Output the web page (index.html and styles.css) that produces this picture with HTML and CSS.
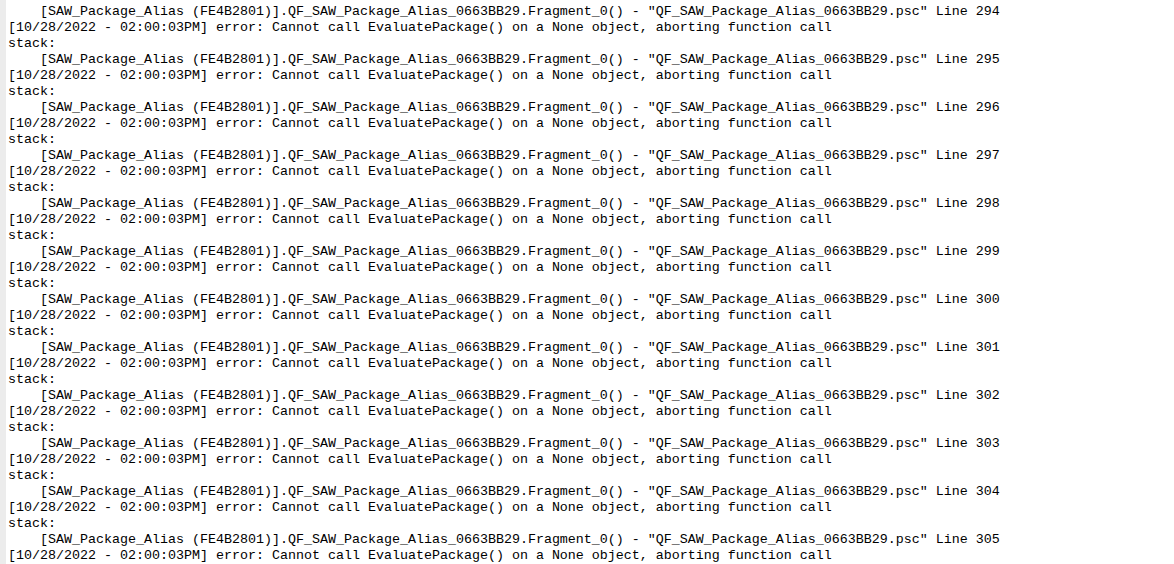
FILE: index.html
```html
<!DOCTYPE html>
<html lang="en">
<head>
<meta charset="utf-8">
<title>Log</title>
<link rel="stylesheet" href="styles.css">
</head>
<body>
<div class="editor">
<div class="gutter"></div>
<pre class="content">    [SAW_Package_Alias (FE4B2801)].QF_SAW_Package_Alias_0663BB29.Fragment_0() - "QF_SAW_Package_Alias_0663BB29.psc" Line 294
[10/28/2022 - 02:00:03PM] error: Cannot call EvaluatePackage() on a None object, aborting function call
stack:
    [SAW_Package_Alias (FE4B2801)].QF_SAW_Package_Alias_0663BB29.Fragment_0() - "QF_SAW_Package_Alias_0663BB29.psc" Line 295
[10/28/2022 - 02:00:03PM] error: Cannot call EvaluatePackage() on a None object, aborting function call
stack:
    [SAW_Package_Alias (FE4B2801)].QF_SAW_Package_Alias_0663BB29.Fragment_0() - "QF_SAW_Package_Alias_0663BB29.psc" Line 296
[10/28/2022 - 02:00:03PM] error: Cannot call EvaluatePackage() on a None object, aborting function call
stack:
    [SAW_Package_Alias (FE4B2801)].QF_SAW_Package_Alias_0663BB29.Fragment_0() - "QF_SAW_Package_Alias_0663BB29.psc" Line 297
[10/28/2022 - 02:00:03PM] error: Cannot call EvaluatePackage() on a None object, aborting function call
stack:
    [SAW_Package_Alias (FE4B2801)].QF_SAW_Package_Alias_0663BB29.Fragment_0() - "QF_SAW_Package_Alias_0663BB29.psc" Line 298
[10/28/2022 - 02:00:03PM] error: Cannot call EvaluatePackage() on a None object, aborting function call
stack:
    [SAW_Package_Alias (FE4B2801)].QF_SAW_Package_Alias_0663BB29.Fragment_0() - "QF_SAW_Package_Alias_0663BB29.psc" Line 299
[10/28/2022 - 02:00:03PM] error: Cannot call EvaluatePackage() on a None object, aborting function call
stack:
    [SAW_Package_Alias (FE4B2801)].QF_SAW_Package_Alias_0663BB29.Fragment_0() - "QF_SAW_Package_Alias_0663BB29.psc" Line 300
[10/28/2022 - 02:00:03PM] error: Cannot call EvaluatePackage() on a None object, aborting function call
stack:
    [SAW_Package_Alias (FE4B2801)].QF_SAW_Package_Alias_0663BB29.Fragment_0() - "QF_SAW_Package_Alias_0663BB29.psc" Line 301
[10/28/2022 - 02:00:03PM] error: Cannot call EvaluatePackage() on a None object, aborting function call
stack:
    [SAW_Package_Alias (FE4B2801)].QF_SAW_Package_Alias_0663BB29.Fragment_0() - "QF_SAW_Package_Alias_0663BB29.psc" Line 302
[10/28/2022 - 02:00:03PM] error: Cannot call EvaluatePackage() on a None object, aborting function call
stack:
    [SAW_Package_Alias (FE4B2801)].QF_SAW_Package_Alias_0663BB29.Fragment_0() - "QF_SAW_Package_Alias_0663BB29.psc" Line 303
[10/28/2022 - 02:00:03PM] error: Cannot call EvaluatePackage() on a None object, aborting function call
stack:
    [SAW_Package_Alias (FE4B2801)].QF_SAW_Package_Alias_0663BB29.Fragment_0() - "QF_SAW_Package_Alias_0663BB29.psc" Line 304
[10/28/2022 - 02:00:03PM] error: Cannot call EvaluatePackage() on a None object, aborting function call
stack:
    [SAW_Package_Alias (FE4B2801)].QF_SAW_Package_Alias_0663BB29.Fragment_0() - "QF_SAW_Package_Alias_0663BB29.psc" Line 305
[10/28/2022 - 02:00:03PM] error: Cannot call EvaluatePackage() on a None object, aborting function call</pre>
</div>
</body>
</html>
```
FILE: styles.css
```css
html, body {
  margin: 0;
  padding: 0;
  background: #ffffff;
  overflow: hidden;
  height: 100%;
}
.editor {
  display: flex;
  height: 564px;
  overflow: hidden;
}
.gutter {
  width: 6px;
  flex: 0 0 6px;
  background: #ececec;
}
.content {
  margin: 0;
  padding: 4px 0 0 2px;
  font-family: "Courier New", "Nimbus Mono PS", "Nimbus Mono L", "FreeMono", "Liberation Mono", monospace;
  font-size: 13.333px;
  line-height: 16px;
  color: #000000;
  white-space: pre;
}
```
